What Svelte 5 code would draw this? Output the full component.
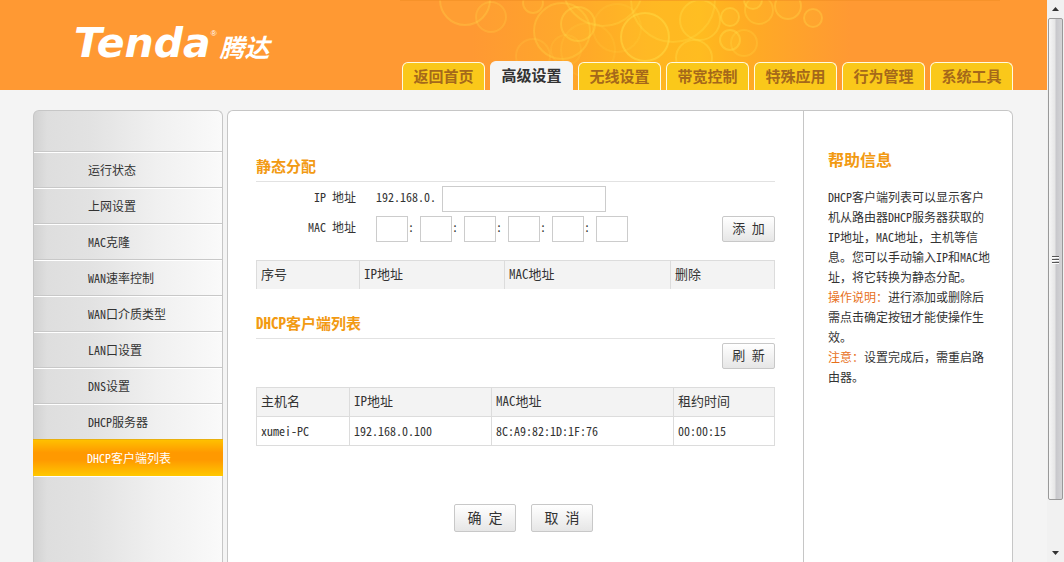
<script>
    const tabs = ['返回首页', '高级设置', '无线设置', '带宽控制', '特殊应用', '行为管理', '系统工具'];
    let activeTab = '高级设置';

    const menu = [
        '运行状态',
        '上网设置',
        'MAC克隆',
        'WAN速率控制',
        'WAN口介质类型',
        'LAN口设置',
        'DNS设置',
        'DHCP服务器',
        'DHCP客户端列表'
    ];
    let activeMenu = 'DHCP客户端列表';

    let ip = '';
    let mac = ['', '', '', '', '', ''];

    const clients = [
        { host: 'xumei-PC', ip: '192.168.0.100', mac: '8C:A9:82:1D:1F:76', lease: '00:00:15' }
    ];

    const help = [
        { text: 'DHCP客户端列表可以显示客户机从路由器DHCP服务器获取的IP地址，MAC地址，主机等信息。您可以手动输入IP和MAC地址，将它转换为静态分配。' },
        { title: '操作说明：', text: '进行添加或删除后需点击确定按钮才能使操作生效。' },
        { title: '注意：', text: '设置完成后，需重启路由器。' }
    ];

    // cx, cy, r, opacity
    const bubbles = [
        [65, 0, 25, 0.25],
        [91, 17, 15, 0.2],
        [133, 3, 10, 0.25],
        [162, 31, 28, 0.25],
        [178, 24, 17, 0.3],
        [203, -14, 40, 0.25],
        [133, 56, 17, 0.15],
        [188, 50, 27, 0.12],
        [166, 50, 15, 0.12],
        [245, 37, 24, 0.4],
        [217, 28, 24, 0.12],
        [273, 0, 42, 0.25],
        [300, 20, 20, 0.3],
        [294, 58, 18, 0.3],
        [330, 17, 9, 0.35],
        [330, 40, 10, 0.35],
        [344, 43, 13, 0.2],
        [353, 0, 9, 0.35],
        [359, 10, 14, 0.25],
        [388, 6, 13, 0.3],
        [413, 18, 9, 0.3]
    ];
</script>

<div class="screen">
    <div class="page">
        <header>
            <svg class="bubbles" width="600" height="90" viewBox="0 0 600 90" aria-hidden="true">
                <defs>
                    <linearGradient id="glow">
                        <stop offset="0.12" stop-color="#ff9933" />
                        <stop offset="0.3" stop-color="#ffa629" />
                        <stop offset="0.42" stop-color="#ffb521" />
                        <stop offset="0.5" stop-color="#ffb91e" />
                        <stop offset="0.58" stop-color="#ffab24" />
                        <stop offset="0.75" stop-color="#ff9933" />
                    </linearGradient>
                </defs>
                <rect width="600" height="90" fill="url(#glow)" />
                {#each bubbles as [cx, cy, r, o]}
                    <circle {cx} {cy} {r} fill="#ffdc3c" fill-opacity={o / 3} stroke="#ffe650" stroke-opacity={o} stroke-width="2" />
                {/each}
                <rect width="600" height="1" fill="#f08c22" fill-opacity="0.5" />
            </svg>
            <div class="logo">
                <span class="brand">Tenda</span><sup>®</sup><span class="cn">腾达</span>
            </div>
            <nav class="tabs">
                {#each tabs as tab}
                    <a href="#top" class:active={tab === activeTab} on:click|preventDefault={() => (activeTab = tab)}>{tab}</a>
                {/each}
            </nav>
        </header>

        <div class="body">
            <nav class="side">
                {#each menu as item}
                    <a href="#menu" class:active={item === activeMenu} on:click|preventDefault={() => (activeMenu = item)}>{item}</a>
                {/each}
                <div class="rest"></div>
            </nav>

            <main>
                <form on:submit|preventDefault>
                    <h2>静态分配</h2>
                    <div class="row">
                        <label class="name" for="ip">IP 地址</label>
                        <span class="prefix">192.168.0.</span>
                        <input id="ip" class="ip" type="text" bind:value={ip}>
                    </div>
                    <div class="row">
                        <label class="name" for="mac0">MAC 地址</label>
                        <div class="mac">
                            {#each mac as part, i}
                                <input id={'mac' + i} type="text" maxlength="2" aria-label={'MAC ' + (i + 1)} bind:value={part}>
                                {#if i < 5}<span>:</span>{/if}
                            {/each}
                        </div>
                        <button type="button" class="small">添 加</button>
                    </div>
                    <table class="static">
                        <colgroup><col><col><col><col></colgroup>
                        <thead>
                            <tr><th>序号</th><th>IP地址</th><th>MAC地址</th><th>删除</th></tr>
                        </thead>
                    </table>

                    <h2>DHCP客户端列表</h2>
                    <div class="row">
                        <button type="button" class="small">刷 新</button>
                    </div>
                    <table class="clients">
                        <colgroup><col><col><col><col></colgroup>
                        <thead>
                            <tr><th>主机名</th><th>IP地址</th><th>MAC地址</th><th>租约时间</th></tr>
                        </thead>
                        <tbody>
                            {#each clients as c}
                                <tr><td>{c.host}</td><td>{c.ip}</td><td>{c.mac}</td><td>{c.lease}</td></tr>
                            {/each}
                        </tbody>
                    </table>

                    <div class="actions">
                        <button type="submit">确 定</button>
                        <button type="reset">取 消</button>
                    </div>
                </form>
            </main>

            <aside>
                <h2>帮助信息</h2>
                {#each help as h}
                    <p>
                        {#if h.title}<span class="title">{h.title}</span>{/if}{#each h.text.split(/([A-Z]+)/) as part, i}{#if i % 2}<span class="half">{part}</span>{:else}{part}{/if}{/each}
                    </p>
                {/each}
            </aside>
        </div>
    </div>

    <div class="scrollbar" aria-hidden="true">
        <svg width="17" height="18" viewBox="0 0 17 18"><path d="M8.5 7L12 11H5Z" fill="#333" /></svg>
        <div class="thumb"><i></i><i></i><i></i></div>
        <svg width="17" height="18" viewBox="0 0 17 18"><path d="M5 7H12L8.5 11Z" fill="#333" /></svg>
    </div>
</div>

<style>
    :global(body) {
        background: #f4f4f4;
        color: #333;
        font-family: 'Noto Sans CJK SC', sans-serif;
        font-size: 12px;
        font-feature-settings: 'hwid' 1;
        text-spacing-trim: space-all;
    }
    a {
        color: inherit;
        text-decoration: none;
    }
    .screen {
        display: flex;
        min-height: 100vh;
    }
    .page {
        flex: 1;
        min-width: 0;
        display: flex;
        flex-direction: column;
    }
    header {
        position: relative;
        display: flex;
        justify-content: space-between;
        height: 90px;
        padding: 0 34px 0 74px;
        background: #ff9933;
    }
    .bubbles {
        position: absolute;
        top: 0;
        right: 47px;
    }
    .logo {
        display: flex;
        align-items: baseline;
        line-height: 86px;
        color: #fff;
        white-space: nowrap;
    }
    .brand {
        font: italic bold 41px/86px 'DejaVu Sans', sans-serif;
        font-feature-settings: normal;
    }
    .logo sup {
        align-self: flex-start;
        font: 8px/68px 'Liberation Sans', sans-serif;
    }
    .cn {
        margin-left: 3px;
        font-size: 25px;
        font-weight: bold;
        font-style: italic;
    }
    .tabs {
        position: relative;
        display: flex;
        align-items: flex-end;
        gap: 5px;
    }
    .tabs a {
        box-sizing: border-box;
        width: 83px;
        height: 28px;
        border: 1px solid #fffbe0;
        border-bottom: 0;
        border-radius: 6px 6px 0 0;
        background: #fac81a;
        color: #a5681a;
        font-size: 15px;
        font-weight: bold;
        line-height: 25px;
        text-align: center;
    }
    .tabs a.active {
        height: 29px;
        border-color: #f4f4f4;
        background: #f4f4f4;
        color: #333;
    }
    .body {
        flex: 1;
        display: flex;
        padding: 20px 34px 0 33px;
    }
    .side {
        box-sizing: border-box;
        width: 190px;
        margin-right: 4px;
        padding-top: 40px;
        border: 1px solid #c6c6c6;
        border-bottom: 0;
        border-radius: 6px 6px 0 0;
        background: linear-gradient(to right, #d2d2d2, #dedede 7%, #e2e2e2 30%, #f0f0f0 65%, #fafafa);
    }
    .side a {
        display: block;
        height: 35px;
        padding-left: 54px;
        border-top: 1px solid #c8c8c8;
        box-shadow: inset 0 1px #fff;
        line-height: 36px;
    }
    .side a.active {
        height: 36px;
        margin: 0 -1px;
        border-top-color: #e8b010;
        box-shadow: none;
        background: linear-gradient(#ffc000, #ff9900 35%, #ff9900 55%, #ffc800);
        color: #fff;
    }
    .rest {
        height: 1px;
        background: #fff;
    }
    main {
        flex: 1;
        min-width: 0;
        padding: 41px 28px 30px;
        border: 1px solid #c6c6c6;
        border-width: 1px 0 0 1px;
        border-radius: 6px 0 0 0;
        background: #fff;
    }
    h2 {
        margin: 0;
        color: #f29a12;
        font-weight: bold;
    }
    main h2 {
        margin-bottom: 4px;
        padding-bottom: 2px;
        border-bottom: 1px solid #e2e2e2;
        font-size: 15px;
        line-height: 27px;
    }
    .row {
        display: flex;
        height: 26px;
        margin-bottom: 4px;
        line-height: 22px;
    }
    .name {
        width: 100px;
        margin-right: 20px;
        text-align: right;
    }
    .prefix {
        width: 66px;
    }
    input {
        box-sizing: border-box;
        width: 32px;
        height: 26px;
        padding: 0 4px;
        border: 1px solid #ccc;
        background: #fff;
        font: inherit;
    }
    .ip {
        width: 164px;
    }
    .mac {
        display: flex;
    }
    .mac span {
        width: 12px;
    }
    button {
        box-sizing: border-box;
        width: 62px;
        height: 28px;
        padding: 0 0 2px;
        border: 1px solid #c8c8c8;
        border-radius: 2px;
        background: linear-gradient(#fff, #e6e6e6);
        color: #333;
        font: inherit;
        font-size: 14px;
        font-feature-settings: inherit;
    }
    button.small {
        width: 53px;
        height: 26px;
        margin-left: auto;
        font-size: 13px;
    }
    table {
        width: 100%;
        margin-top: 18px;
        border-collapse: collapse;
        table-layout: fixed;
    }
    .static {
        margin-bottom: 20px;
    }
    .static col:nth-child(1) { width: 103px; }
    .static col:nth-child(2) { width: 145px; }
    .static col:nth-child(3) { width: 166px; }
    .clients col:nth-child(1) { width: 93px; }
    .clients col:nth-child(2) { width: 142px; }
    .clients col:nth-child(3) { width: 182px; }
    th, td {
        padding: 0 4px;
        border: 1px solid #dcdcdc;
        line-height: 28px;
        text-align: left;
    }
    th {
        padding-bottom: 2px;
        background: #f3f3f3;
        font-size: 13px;
        font-weight: normal;
        line-height: 26px;
    }
    .static th {
        border-bottom: 0;
    }
    .actions {
        display: flex;
        justify-content: center;
        gap: 15px;
        margin-top: 58px;
        padding-left: 16px;
    }
    aside {
        box-sizing: border-box;
        width: 210px;
        padding: 38px 20px 0 24px;
        border: 1px solid #c6c6c6;
        border-bottom: 0;
        border-radius: 0 6px 0 0;
        background: #fff;
    }
    aside h2 {
        margin-bottom: 18px;
        font-size: 16px;
        line-height: 20px;
    }
    aside p {
        margin: 0;
        line-height: 20px;
        font-feature-settings: normal;
    }
    .half {
        font-feature-settings: 'hwid' 1;
    }
    .title {
        color: #e8701a;
    }
    .scrollbar {
        box-sizing: border-box;
        position: sticky;
        top: 0;
        display: flex;
        flex-direction: column;
        width: 17px;
        height: 100vh;
        background: #f1f1f1;
    }
    .thumb {
        box-sizing: border-box;
        flex: 0 1 482px;
        display: flex;
        flex-direction: column;
        align-items: center;
        justify-content: center;
        gap: 2px;
        margin: 0 1px;
        border: 1px solid #999;
        border-radius: 2px;
        background: linear-gradient(to right, #f6f6f6, #e6e6e6 45%, #c8c8cc 55%, #d4d4d6);
    }
    .thumb i {
        width: 7px;
        height: 1px;
        background: #555;
        box-shadow: 0 1px #fff;
    }
    .scrollbar svg:last-child {
        margin-top: auto;
    }
</style>
